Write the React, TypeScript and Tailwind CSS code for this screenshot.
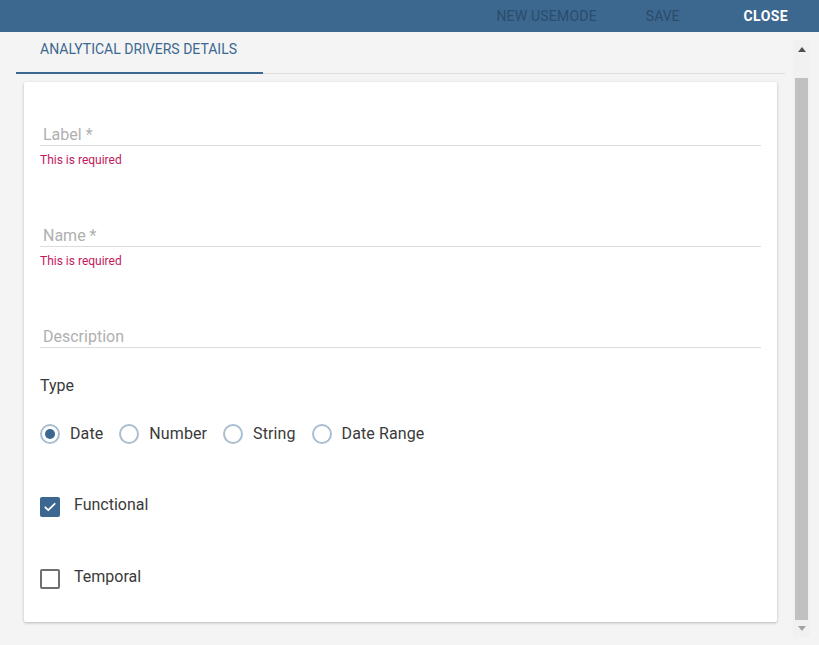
import React from 'react';

const font = { fontFamily: 'Roboto, "Liberation Sans", sans-serif' };

const TextField: React.FC<{ label: string; error?: boolean; className?: string }> = ({ label, error, className = '' }) => (
  <div className={className}>
    <div className="h-[30px] border-b border-[#dcdcdc] flex items-end pl-[3px]">
      <span className="text-[16px] leading-[20px] text-[#b0b0b0]">{label}</span>
    </div>
    {error && <div className="mt-[6px] text-[12px] leading-[16px] text-[#c2185b]">This is required</div>}
  </div>
);

const Radio: React.FC<{ label: string; checked?: boolean }> = ({ label, checked }) => (
  <div className="flex items-center mr-[16px]">
    <span className="w-[20px] h-[20px] rounded-full border-2 border-[#a9bed1] flex items-center justify-center">
      {checked && <span className="w-[10px] h-[10px] rounded-full bg-[#3b6790]" />}
    </span>
    <span className="ml-[10px] text-[16px] leading-[20px] text-[#3a3a3a] tracking-[0.1px]">{label}</span>
  </div>
);

const Checkbox: React.FC<{ label: string; checked?: boolean; className?: string }> = ({ label, checked, className = '' }) => (
  <div className={`flex items-center ${className}`}>
    {checked ? (
      <span className="w-[20px] h-[20px] rounded-[2px] bg-[#3b6790] flex items-center justify-center">
        <svg width="14" height="14" viewBox="0 0 24 24" fill="none" stroke="white" strokeWidth="3" strokeLinecap="round" strokeLinejoin="round">
          <path d="M4 12.5l5 5L20 6.5" />
        </svg>
      </span>
    ) : (
      <span className="w-[20px] h-[20px] rounded-[2px] border-2 border-[#6f6f6f]" />
    )}
    <span className="ml-[14px] -mt-[4px] text-[16px] leading-[20px] text-[#3a3a3a]">{label}</span>
  </div>
);

export default function App() {
  return (
    <div className="w-[819px] h-[645px] bg-[#f4f4f4] flex flex-col overflow-hidden" style={font}>
      <div className="h-[32px] bg-[#3c6890] flex items-center justify-end pr-[31px] text-[14px] shrink-0">
        <span className="text-[#2b4c6b] tracking-[0.2px]">NEW USEMODE</span>
        <span className="ml-[49px] text-[#2b4c6b]">SAVE</span>
        <span className="ml-[64px] text-white font-bold tracking-[0.4px]">CLOSE</span>
      </div>
      <div className="flex flex-1">
        <div className="w-[793px] pl-[16px] pr-[8px]">
          <div className="flex items-end">
            <div className="w-[247px] pt-[7px] h-[42px] border-b-2 border-[#3c6890] pl-[24px] text-[14px] leading-[20px] text-[#3c6890]">
              ANALYTICAL DRIVERS DETAILS
            </div>
            <div className="flex-1 border-b border-[#dedede]" />
          </div>
          <div className="mx-[8px] mt-[8px] h-[540px] bg-white rounded-[2px] shadow-[0_1px_3px_rgba(0,0,0,0.25)] px-[16px] pt-[34px]">
            <TextField label="Label *" error />
            <TextField label="Name *" error className="mt-[49px]" />
            <TextField label="Description" className="mt-[49px]" />
            <div className="mt-[26px] text-[16px] leading-[24px] text-[#3a3a3a]">Type</div>
            <div className="mt-[26px] flex">
              <Radio label="Date" checked />
              <Radio label="Number" />
              <Radio label="String" />
              <Radio label="Date Range" />
            </div>
            <Checkbox label="Functional" checked className="mt-[53px]" />
            <Checkbox label="Temporal" className="mt-[52px]" />
          </div>
        </div>
        <div className="w-[17px] mt-[8px] h-[597px] bg-[#f1f1f1] flex flex-col">
          <div className="h-[38px] flex justify-center pt-[7px]">
            <svg width="8" height="5" viewBox="0 0 8 5"><path d="M0 5L4 0L8 5Z" fill="#505050" /></svg>
          </div>
          <div className="mx-[2px] h-[542px] bg-[#c1c1c1]" />
          <div className="flex-1 flex justify-center pt-[6px]">
            <svg width="8" height="5" viewBox="0 0 8 5"><path d="M0 0L4 5L8 0Z" fill="#a3a3a3" /></svg>
          </div>
        </div>
      </div>
    </div>
  );
}
